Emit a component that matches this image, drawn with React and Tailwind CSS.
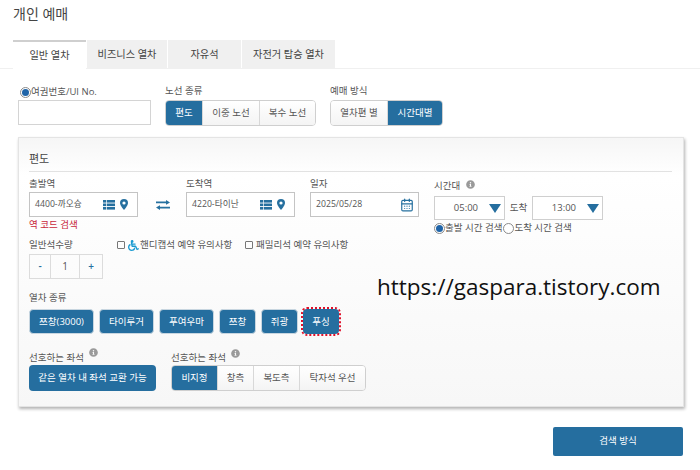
import React from "react";
import { CalendarDays } from "lucide-react";
import { FaWheelchair, FaInfoCircle } from "react-icons/fa";

const font = "font-['Open_Sans','Noto_Sans_CJK_KR',sans-serif]";

function TableIcon() {
  return (
    <svg width="12" height="10" viewBox="0 0 12 10" fill="#26709f">
      <rect x="0" y="0" width="3" height="2.6" /><rect x="3.7" y="0" width="8.3" height="2.6" />
      <rect x="0" y="3.5" width="3" height="2.6" /><rect x="3.7" y="3.5" width="8.3" height="2.6" />
      <rect x="0" y="7" width="3" height="2.6" /><rect x="3.7" y="7" width="8.3" height="2.6" />
    </svg>
  );
}

function Pin() {
  return (
    <svg width="8" height="11" viewBox="0 0 8 11">
      <path d="M4 0a4 4 0 0 0-4 4c0 2.600 4 7 4 7s4-4.400 4-7a4 4 0 0 0-4-4z" fill="#26709f" />
      <circle cx="4" cy="4" r="1.600" fill="#fff" />
    </svg>
  );
}

function Swap() {
  return (
    <svg width="14" height="10" viewBox="0 0 14 10" fill="#26709f" className="shrink-0">
      <path d="M0 1.600h10V0l4 2.400-4 2.400V3.200H0z" />
      <path d="M14 6.800H4V5.200L0 7.600l4 2.400V8.400h10z" />
    </svg>
  );
}

function Radio({ on, label, className = "" }) {
  return (
    <span className={`flex items-center text-[9.5px] text-[#555] ${className}`}>
      <span className="w-[11px] h-[11px] rounded-full border border-[#8a8a8a] flex items-center justify-center bg-white shrink-0">
        {on && <span className="w-[7px] h-[7px] rounded-full bg-[#1f64a8]" />}
      </span>
      {label}
    </span>
  );
}

function Check({ children, className = "" }) {
  return (
    <span className={`flex items-center text-[9.5px] text-[#555] ${className}`}>
      <span className="w-[8px] h-[8px] border border-[#777] rounded-[1px] mr-[3px]" />
      {children}
    </span>
  );
}

function Tab({ w, active, children }) {
  return (
    <div
      className={`${w} flex items-center justify-center text-[10.2px] text-[#444] mr-px ${
        active ? "bg-white border-t-2 border-[#cfcfcf] -mb-px h-[30px]" : "bg-[#f0f0f0] h-[29px]"
      }`}
    >
      {children}
    </div>
  );
}

function Seg({ items, active }) {
  return (
    <div className="flex w-fit h-[26px] rounded-[4px] border border-[#cfcfcf] overflow-hidden">
      {items.map(([t, w]) => (
        <div
          key={t}
          className={`${w} flex items-center justify-center text-[9.5px] border-r border-[#d8d8d8] last:border-r-0 ${
            t === active ? "bg-[#256e9f] text-white" : "bg-gradient-to-b from-white to-[#f4f4f4] text-[#555]"
          }`}
        >
          {t}
        </div>
      ))}
    </div>
  );
}

function Train({ w, children, focus }) {
  return (
    <div
      className={`${w} h-[25px] rounded-[4px] bg-[#256e9f] text-white text-[9.5px] flex items-center justify-center ${
        focus ? "outline-2 outline-dotted outline-[#e0102a]" : "border border-[#c8d6e0]"
      }`}
    >
      {children}
    </div>
  );
}

function Station({ value }) {
  return (
    <div className="w-[109px] h-[25px] border border-[#c4c4c4] flex items-center pl-[5px] pr-[9px] bg-white shrink-0">
      <span className="text-[8.7px] text-[#555] flex-1">{value}</span>
      <TableIcon />
      <span className="ml-[5px] flex"><Pin /></span>
    </div>
  );
}

function Select({ value }) {
  return (
    <div className="w-[71px] h-[24px] border border-[#cfcfcf] flex items-center bg-white">
      <span className="flex-1 text-right text-[9.5px] text-[#555] pr-[11px]">{value}</span>
      <span className="w-0 h-0 border-l-[6px] border-r-[6px] border-t-[9px] border-l-transparent border-r-transparent border-t-[#256e9f] mr-[3px]" />
    </div>
  );
}

function Tip() {
  return <FaInfoCircle size={9} className="text-[#9a9a9a]" />;
}

export default function App() {
  return (
    <div className={`${font} relative w-[700px] h-[470px] overflow-hidden bg-white`}>
      <div className="px-[13px] pt-[5px] text-[14px] leading-[18px] text-[#444]">개인 예매</div>

      <div className="flex mt-[17px] pl-[13px] border-b border-[#f0f0f0] h-[29px]">
        <Tab w="w-[73px]" active>일반 열차</Tab>
        <Tab w="w-[80px]">비즈니스 열차</Tab>
        <Tab w="w-[73px]">자유석</Tab>
        <Tab w="w-[93px]">자전거 탑승 열차</Tab>
      </div>

      <div className="flex pl-[18px] mt-[15px] items-start">
        <div className="w-[133px] mr-[14px]">
          <Radio on label="여권번호/UI No." className="h-[16px] ml-[2px]" />
          <div className="h-[25px] border border-[#d4d4d4]" />
        </div>
        <div className="mr-[14px]">
          <div className="text-[9.5px] text-[#555] h-[16px] leading-[14px]">노선 종류</div>
          <Seg items={[["편도", "w-[37px]"], ["이중 노선", "w-[57px]"], ["복수 노선", "w-[55px]"]]} active="편도" />
        </div>
        <div>
          <div className="text-[9.5px] text-[#555] h-[16px] leading-[14px]">예매 방식</div>
          <Seg items={[["열차편 별", "w-[57px]"], ["시간대별", "w-[54px]"]]} active="시간대별" />
        </div>
      </div>

      <div className="mx-[18px] mt-[11px] w-[666px] h-[270px] border border-[#e4e4e4] shadow-[1px_2px_3px_rgba(0,0,0,0.3)] bg-gradient-to-b from-[#f6f6f6] via-white via-[14%] to-[#f7f7f7] px-[10px]">
        <div className="text-[11px] leading-[16px] text-[#444] pt-[13px] h-[34px] border-b border-[#e2e2e2] w-[643px]">편도</div>

        <div className="flex mt-[4px] items-start">
          <div className="w-[157px]">
            <div className="text-[9.5px] text-[#555] h-[16px] leading-[16px]">출발역</div>
            <div className="flex items-center">
              <Station value="4400-까오슝" />
              <span className="ml-[18px] flex"><Swap /></span>
            </div>
            <div className="text-[9.5px] text-[#c8283c] leading-[14px] mt-[1px]">역 코드 검색</div>
          </div>
          <div className="w-[124px]">
            <div className="text-[9.5px] text-[#555] h-[16px] leading-[16px]">도착역</div>
            <Station value="4220-타이난" />
          </div>
          <div className="w-[124px]">
            <div className="text-[9.5px] text-[#555] h-[16px] leading-[16px]">일자</div>
            <div className="w-[109px] h-[25px] border border-[#c4c4c4] flex items-center pl-[5px] pr-[4px] bg-white">
              <span className="text-[8.7px] text-[#555] flex-1">2025/05/28</span>
              <CalendarDays size={14} className="text-[#26709f]" />
            </div>
          </div>
          <div className="pt-[2px]">
            <div className="flex items-center gap-[6px] text-[9.5px] text-[#555] h-[16px]">
              시간대 <span className="-mt-[3px]"><Tip /></span>
            </div>
            <div className="flex items-center mt-[2px]">
              <Select value="05:00" />
              <span className="text-[9.5px] text-[#555] w-[27px] text-center">도착</span>
              <Select value="13:00" />
            </div>
            <div className="flex mt-[1px]">
              <Radio on label="출발 시간 검색" className="mr-px" />
              <Radio label="도착 시간 검색" />
            </div>
          </div>
        </div>

        <div className="flex items-center mt-[2px] h-[16px]">
          <span className="w-[88px] text-[9.5px] text-[#555]">일반석수량</span>
          <Check className="w-[128px]">
            <FaWheelchair size={11} className="text-[#1b9bd1] mr-[1px]" />핸디캡석 예약 유의사항
          </Check>
          <Check>패밀리석 예약 유의사항</Check>
        </div>
        <div className="flex w-[74px] h-[25px] border border-[#dcdcdc] text-[10px] font-semibold mt-[1px]">
          <span className="w-[21px] flex items-center justify-center text-[#26709f] border-r border-[#dcdcdc]">-</span>
          <span className="w-[29px] flex items-center justify-center text-[#555] font-normal border-r border-[#dcdcdc]">1</span>
          <span className="flex-1 flex items-center justify-center text-[#26709f]">+</span>
        </div>

        <div className="text-[9.5px] text-[#555] mt-[12px] h-[18px] leading-[14px]">열차 종류</div>
        <div className="flex gap-[5px]">
          <Train w="w-[65px]">쯔창(3000)</Train>
          <Train w="w-[55px]">타이루거</Train>
          <Train w="w-[55px]">푸여우마</Train>
          <Train w="w-[37px]">쯔창</Train>
          <Train w="w-[37px]">쥐광</Train>
          <Train w="w-[36px]" focus>푸싱</Train>
        </div>

        <div className="flex mt-[12px]">
          <div className="w-[142px]">
            <div className="flex items-start gap-[5px] text-[9.5px] text-[#555] h-[19px] pt-[5px] leading-[13px]">
              선호하는 좌석 <span className="-mt-[3px]"><Tip /></span>
            </div>
            <div className="w-[127px] h-[26px] rounded-[4px] bg-[#256e9f] text-white text-[9.5px] flex items-center justify-center">
              같은 열차 내 좌석 교환 가능
            </div>
          </div>
          <div>
            <div className="flex items-start gap-[5px] text-[9.5px] text-[#555] h-[19px] pt-[5px] leading-[13px]">
              선호하는 좌석 <span className="-mt-[2px]"><Tip /></span>
            </div>
            <Seg
              items={[["비지정", "w-[46px]"], ["창측", "w-[36px]"], ["복도측", "w-[46px]"], ["탁자석 우선", "w-[65px]"]]}
              active="비지정"
            />
          </div>
        </div>
      </div>

      <div className="flex justify-end pr-[17px] mt-[20px]">
        <div className="w-[130px] h-[29px] rounded-[2px] bg-[#256e9f] text-white text-[9.5px] flex items-center justify-center">
          검색 방식
        </div>
      </div>

      <div className="absolute left-[377px] top-[272px] text-[22.5px] leading-[30px] text-[#111] font-['Open_Sans',sans-serif]">
        https://gaspara.tistory.com
      </div>
    </div>
  );
}
